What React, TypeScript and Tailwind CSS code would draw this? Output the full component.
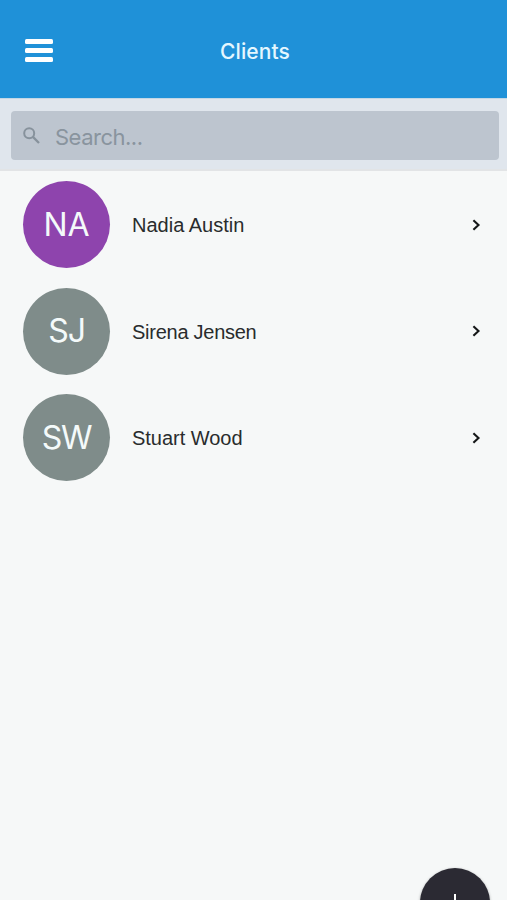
import React from "react";

interface Client {
  name: string;
  initials: string;
  color: string;
  initialsStyle: string;
  nameStyle: string;
}

const clients: Client[] = [
  { name: "Nadia Austin", initials: "NA", color: "bg-[#8e44ad]", initialsStyle: "tracking-[-0.2px]", nameStyle: "tracking-[0px]" },
  { name: "Sirena Jensen", initials: "SJ", color: "bg-[#7f8c8a]", initialsStyle: "tracking-[-1.2px]", nameStyle: "tracking-[-0.26px]" },
  { name: "Stuart Wood", initials: "SW", color: "bg-[#7f8c8a]", initialsStyle: "tracking-[-1.4px]", nameStyle: "tracking-[-0.03px]" },
];

function Header() {
  return (
    <header className="grid h-[98px] grid-cols-[1fr_auto_1fr] items-center bg-[#1f91d8] pt-1 pl-[25px]">
      <button aria-label="Menu" className="flex w-[28px] flex-col gap-1 pb-px">
        <span className="h-[5px] w-full rounded-[1.5px] bg-white" />
        <span className="h-[5px] w-full rounded-[1.5px] bg-white" />
        <span className="h-[5px] w-full rounded-[1.5px] bg-white" />
      </button>
      <h1 className="mt-px -ml-[22px] font-['Inter',sans-serif] text-[21px] leading-6 font-medium tracking-[0.1px] text-[#e4f7ff]">Clients</h1>
    </header>
  );
}

function SearchBar() {
  return (
    <div className="h-[73px] border-t border-b-2 border-t-[#c3d7e5] border-b-[#e2e4e6] bg-[#e0e6ed] pt-[12px] pr-[8px] pl-[11px]">
      <div className="flex h-[49px] items-center rounded-[4px] bg-[#bdc5cf] pl-[12px]">
        <svg viewBox="0 0 17 17" className="h-[17px] w-[17px]" fill="none" stroke="#87929c" strokeWidth="2">
          <circle cx="6.2" cy="6.2" r="5" />
          <path d="M9.9 9.9 16 16" strokeWidth="2.3" />
        </svg>
        <span className="mt-[2px] ml-[15px] font-['Inter',sans-serif] text-[22px] leading-7 tracking-[-0.5px] text-[#89949e]">Search...</span>
      </div>
    </div>
  );
}

function ClientRow({ client }: { client: Client }) {
  return (
    <li className="flex h-[106.5px] items-center pr-[26px] pl-[23px]">
      <div className={`flex h-[87px] w-[87px] shrink-0 items-center justify-center rounded-full ${client.color}`}>
        <span className={`font-['Inter',sans-serif] text-[32px] leading-10 font-normal text-[#f4fafa] ${client.initialsStyle}`}>{client.initials}</span>
      </div>
      <span className={`mt-px ml-[22px] flex-1 font-['Liberation_Sans',Arial,sans-serif] text-[20px] leading-6 text-[#292c2d] ${client.nameStyle}`}>{client.name}</span>
      <svg viewBox="0 0 9 12" className="h-[12px] w-[9px]" fill="none" stroke="#151718" strokeWidth="2.1">
        <path d="M1.4 1.2 6.5 6 1.4 10.8" />
      </svg>
    </li>
  );
}

export default function App() {
  return (
    <main className="relative flex h-[900px] w-[507px] flex-col overflow-hidden bg-[#f6f8f8]">
      <Header />
      <SearchBar />
      <ul className="mt-[0.4px]">
        {clients.map((client) => (
          <ClientRow key={client.name} client={client} />
        ))}
      </ul>
      <button aria-label="Add client" className="absolute top-[867.5px] left-[420px] flex h-[70px] w-[70px] items-center justify-center rounded-full bg-[#2b2a33] shadow-[0_1px_3px_rgba(0,0,0,0.35)]">
        <svg viewBox="0 0 18 18" className="h-[18px] w-[18px]" stroke="white" strokeWidth="2">
          <path d="M9 0v18M0 9h18" />
        </svg>
      </button>
    </main>
  );
}
